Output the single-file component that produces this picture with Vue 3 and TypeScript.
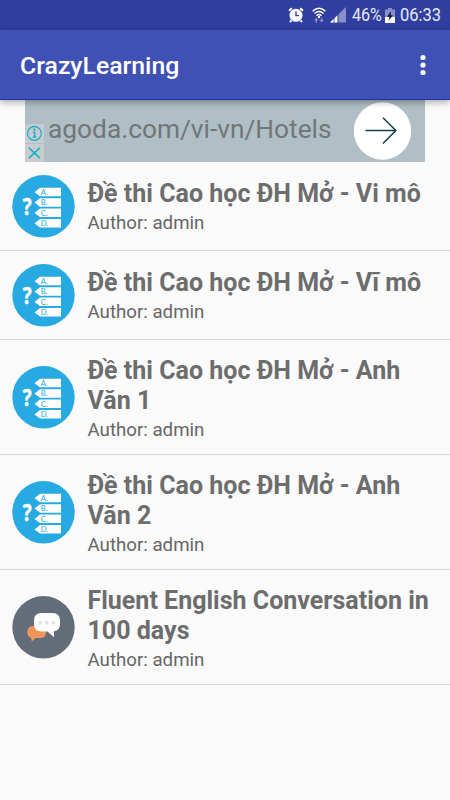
<script setup lang="ts">
interface Course {
  title: string[]
  author: string
  kind: 'quiz' | 'chat'
}

const courses: Course[] = [
  { title: ['Đề thi Cao học ĐH Mở - Vi mô'], author: 'admin', kind: 'quiz' },
  { title: ['Đề thi Cao học ĐH Mở - Vĩ mô'], author: 'admin', kind: 'quiz' },
  { title: ['Đề thi Cao học ĐH Mở - Anh', 'Văn 1'], author: 'admin', kind: 'quiz' },
  { title: ['Đề thi Cao học ĐH Mở - Anh', 'Văn 2'], author: 'admin', kind: 'quiz' },
  { title: ['Fluent English Conversation in', '100 days'], author: 'admin', kind: 'chat' },
]

const answers = ['A.', 'B.', 'C.', 'D.']
</script>

<template>
  <div class="screen">
    <div class="status">
      <svg class="alarm" width="16" height="16" viewBox="0 0 16 16">
        <circle cx="8" cy="8.3" r="6.5" fill="#fff" />
        <path d="M1 3.8 3.8 1.2M15 3.8 12.2 1.2M3.4 13.4 2 15M12.6 13.4 14 15" stroke="#fff" stroke-width="2" />
        <path d="M8 4.6V8.6H11" fill="none" stroke="#303f9f" stroke-width="1.4" />
      </svg>
      <svg class="wifi" width="14" height="16" viewBox="0 0 14 16">
        <g fill="none" stroke="#fff" stroke-width="1.4">
          <path d="M.6 4.2Q7-1.8 13.4 4.2" />
          <path d="M2.5 6.5Q7 2.3 11.5 6.5" />
          <path d="M4.5 8.7Q7 6.4 9.5 8.7" />
        </g>
        <circle cx="7" cy="10" r="1.2" fill="#fff" />
        <path d="M4.2 10.8 2 13.3H3.5V15.5H5V13.3H6.4ZM9.7 15.5 7.5 13H9V10.8H10.4V13H12Z" fill="#8790c9" />
      </svg>
      <svg class="signal" width="16" height="16" viewBox="0 0 16 16">
        <path d="M16 0V15.5H0Z" fill="#8790c9" />
        <path d="M7.5 8.3V15.5H0Z" fill="#fff" />
        <path d="M4 10V16M8 7V16" stroke="#303f9f" stroke-width=".8" />
      </svg>
      <span class="percent">46%</span>
      <svg class="battery" width="10" height="15" viewBox="0 0 10 15">
        <path d="M3 0H7V1.5H10V9H0V1.5H3Z" fill="#8790c9" />
        <path d="M0 9H10V15H0Z" fill="#fff" />
        <path d="M6 3 2 8.7H4.5L3.6 12.8 8 7.2H5.6Z" fill="#16183b" />
      </svg>
      <span class="time">06:33</span>
    </div>

    <header class="toolbar">
      <h1>CrazyLearning</h1>
      <svg width="6" height="22" viewBox="0 0 6 22" fill="#fff">
        <circle cx="3" cy="3.5" r="2.6" /><circle cx="3" cy="11" r="2.6" /><circle cx="3" cy="18.5" r="2.6" />
      </svg>
    </header>

    <div class="ad">
      <div class="badges">
        <svg width="19" height="19" viewBox="0 0 19 19">
          <circle cx="9.4" cy="9.4" r="6.9" fill="none" stroke="#19b0ce" stroke-width="1.3" />
          <path d="M7.8 8.3H9.6V13M7.8 13H11.2" fill="none" stroke="#19b0ce" stroke-width="1.5" />
          <circle cx="9.4" cy="5.6" r="1.2" fill="#19b0ce" />
        </svg>
        <svg width="19" height="18" viewBox="0 0 19 18">
          <path d="M4 3.8 14.8 14.2M14.8 3.8 4 14.2" stroke="#19b0ce" stroke-width="1.6" />
        </svg>
      </div>
      <span class="url">agoda.com/vi-vn/Hotels</span>
      <svg class="go" width="58" height="58" viewBox="0 0 58 58">
        <circle cx="28.5" cy="29" r="28.7" fill="#fff" />
        <path d="M11.5 28.5H41.5M29 15.8 41.8 28.5 29 41.5" fill="none" stroke="#173f50" stroke-width="1.6" />
      </svg>
    </div>

    <main>
      <article v-for="course in courses" :key="course.title.join(' ')" :class="['row', { tall: course.title.length > 1 }]">
        <svg v-if="course.kind === 'quiz'" width="63" height="63" viewBox="0 0 63 63">
          <circle cx="31.5" cy="31.3" r="31.2" fill="#27a9e1" />
          <text class="question" transform="translate(10.7 39.8) scale(.82 1)">?</text>
          <g v-for="(answer, i) in answers" :key="answer" :transform="`translate(0 ${i * 10.4})`">
            <path d="M22.5 17.2 28 12.8H49V21.3H28Z" fill="#fff" />
            <text class="answer" x="28.7" y="20">{{ answer }}</text>
          </g>
        </svg>
        <svg v-else width="63" height="63" viewBox="0 0 63 63">
          <circle cx="31.5" cy="31.3" r="31.2" fill="#636d79" />
          <path d="M21 30H28Q34 30 34 36.5Q34 42 28 42H23.5L19.8 45.5L19 41.8Q15.3 40.5 15.3 36.5Q15.3 30 21 30Z" fill="#f3955a" />
          <path d="M29.5 17H40.5Q48 17 48 24.5V28Q48 34.5 42 35.3V41.3L35.5 35.5H29.5Q22 35.5 22 28V24.5Q22 17 29.5 17Z" fill="#fff" />
          <g fill="#e1e2e3"><circle cx="28.3" cy="26.8" r="2" /><circle cx="34.8" cy="26.8" r="2" /><circle cx="41.3" cy="26.8" r="2" /></g>
        </svg>
        <div class="copy">
          <h2><span v-for="line in course.title" :key="line">{{ line }}</span></h2>
          <p>Author: {{ course.author }}</p>
        </div>
      </article>
    </main>
  </div>
</template>

<style>
body {
  margin: 0;
  background: #fafafa;
}
</style>

<style scoped>
.screen {
  width: 450px;
  height: 800px;
  overflow: hidden;
  background: #fafafa;
  font-family: Roboto, sans-serif;
}

.status {
  display: flex;
  align-items: center;
  box-sizing: border-box;
  height: 30px;
  padding-left: 288px;
  background: #303f9f;
  color: #e8eaf5;
  font-size: 18.5px;
  line-height: 20px;
  white-space: nowrap;
}

.status svg {
  flex: none;
}

.wifi {
  margin-left: 8px;
}

.signal {
  margin-left: 4px;
}

.percent {
  width: 30px;
  margin: 0 0 1px 6px;
  transform: scaleX(0.87);
  transform-origin: left;
}

.battery {
  margin-left: 3px;
}

.time {
  margin: 0 0 1px 5px;
  transform: scaleX(0.89);
  transform-origin: left;
}

.toolbar {
  position: relative;
  z-index: 1;
  display: flex;
  align-items: center;
  justify-content: space-between;
  box-sizing: border-box;
  height: 70px;
  padding: 0 24.5px 0 20px;
  border-bottom: 1px solid #1835ae;
  background: #3f51b5;
  box-shadow: 0 2px 7px rgb(0 0 0 / 35%);
}

h1 {
  margin: 3px 0 0;
  color: #fff;
  font-size: 24.8px;
  font-weight: 500;
  line-height: 30px;
}

.ad {
  display: flex;
  align-items: center;
  box-sizing: border-box;
  width: 400px;
  height: 62px;
  margin: 0 25px;
  background: #b0bec5;
}

.badges {
  display: flex;
  flex-direction: column;
  align-self: flex-end;
  gap: 1px;
}

.badges svg {
  background: #c9cccf;
}

.url {
  width: 306px;
  margin: -4px 0 0 4px;
  color: #717679;
  font-size: 26.3px;
  line-height: 32px;
  white-space: nowrap;
}

.row {
  display: flex;
  align-items: center;
  box-sizing: border-box;
  height: 89px;
  padding-left: 12px;
  border-bottom: 1px solid #d5d5d5;
}

.tall {
  height: 115px;
}

.row svg {
  flex: none;
}

.question {
  fill: #fff;
  stroke: #fff;
  stroke-width: 0.5px;
  font: bold 22.5px "Noto Sans", sans-serif;
}

.answer {
  fill: #27a9e1;
  font: 7.8px Lato, sans-serif;
}

.copy {
  padding-top: 2px;
  margin-left: 12.5px;
}

.tall .copy {
  padding-top: 4px;
}

h2 {
  margin: 0;
  color: #6d6d6d;
  font-size: 25.02px;
  font-weight: 700;
  line-height: 29.5px;
}

h2 span {
  display: block;
  white-space: nowrap;
}

p {
  margin: 3px 0 0;
  color: #666;
  font-size: 18.7px;
  line-height: 24px;
}
</style>
